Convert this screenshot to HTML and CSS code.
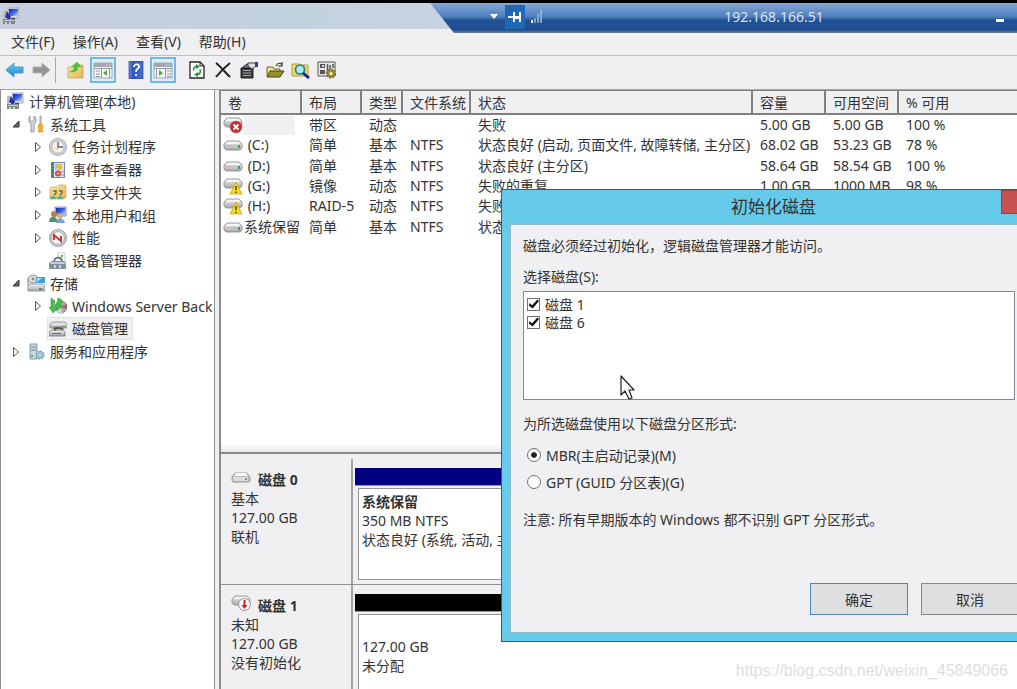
FILE: index.html
```html
<!DOCTYPE html>
<html lang="zh-CN">
<head>
<meta charset="utf-8">
<title>计算机管理</title>
<link rel="stylesheet" href="styles.css">
</head>
<body>
<svg class="defs" width="0" height="0" aria-hidden="true">
  <defs>
    <linearGradient id="gBlue" x1="0" y1="0" x2="1" y2="1"><stop offset="0" stop-color="#1a22b8"/><stop offset=".5" stop-color="#3b62dc"/><stop offset="1" stop-color="#c4d8fa"/></linearGradient>
    <linearGradient id="gArrow" x1="0" y1="0" x2="0" y2="1"><stop offset="0" stop-color="#6cc8f2"/><stop offset="1" stop-color="#1787cf"/></linearGradient>
    <linearGradient id="gDrive" x1="0" y1="0" x2="0" y2="1"><stop offset="0" stop-color="#f2f2f2"/><stop offset="1" stop-color="#a4a4a6"/></linearGradient>
    <linearGradient id="gFolder" x1="0" y1="0" x2="1" y2="1"><stop offset="0" stop-color="#fae9a4"/><stop offset="1" stop-color="#e2b354"/></linearGradient>
    <linearGradient id="gHelp" x1="0" y1="0" x2="1" y2="0"><stop offset="0" stop-color="#6d8fe2"/><stop offset=".25" stop-color="#3357c0"/><stop offset="1" stop-color="#4a70d2"/></linearGradient>
  </defs>
  <symbol id="tw-closed" viewBox="0 0 8 12"><path d="M1.500 1.500v9L6.500 6z" fill="#fff" stroke="#555"/></symbol>
  <symbol id="tw-open" viewBox="0 0 8 12"><path d="M7 3v6H1z" fill="#666" stroke="#333"/></symbol>
  <symbol id="computer" viewBox="0 0 18 18">
    <path d="M6 1h11v10H8z" fill="#d6dbe6" stroke="#a6adbb"/><path d="M7 2h9v7H7z" fill="url(#gBlue)"/>
    <path d="M1 5l3-2 2 4-3 5H1z" fill="#b5bcb9"/><path d="M5 4l4 6-2 3-4-3z" fill="#2832a4"/>
    <path d="M1 12h12v5H1z" fill="#7e8988"/><path d="M2 13h10v1H2zM3 15h2v2H3zM7 15h2v2H7z" fill="#c9d0ce"/><path d="M9 11h4v1H9z" fill="#444"/>
  </symbol>
  <symbol id="tools" viewBox="0 0 18 18">
    <path d="M3 1v4l2 2 2-2V1l2 2v4L7 9v8H4V9L2 7V3z" fill="#d9dbdd" stroke="#83878b" stroke-width=".8"/>
    <path d="M13 1h1v9h-1z" stroke="#8b8b8b" stroke-width=".7" fill="#ddd"/><path d="M12 9h3l1 3-1 2 1 3h-5l1-3-1-2z" fill="#f4ae25" stroke="#c98712" stroke-width=".5"/>
  </symbol>
  <symbol id="clock" viewBox="0 0 18 18">
    <circle cx="9" cy="9" r="9" fill="#9ea2a8"/><circle cx="9" cy="9" r="8.2" fill="#d3d6db"/><circle cx="9" cy="9" r="6.2" fill="#fbf4e0" stroke="#8d939c" stroke-width=".6"/>
    <path d="M9 4v5h5" fill="none" stroke="#4d6391" stroke-width="1.4"/><path d="M5 10h4v3z" fill="#f1cf87"/>
  </symbol>
  <symbol id="eventlog" viewBox="0 0 18 18">
    <path d="M2 1h14v16H2z" fill="#7488ae"/><path d="M5 2h10v14H5z" fill="#dce5f3"/><path d="M2 3h3M2 6h3M2 9h3M2 12h3M2 15h3" stroke="#47536c"/>
    <path d="M9 3h4v6H9z" fill="#efbd2c"/><path d="M6 4h3M6 6h3M6 8h2M12 11h3M12 14h3" stroke="#8297bd"/><circle cx="9" cy="12.5" r="3" fill="#dd4136"/><path d="M8 11.500l2 2m0-2l-2 2" stroke="#fff"/>
  </symbol>
  <symbol id="shared" viewBox="0 0 18 18">
    <path d="M1 5l1-1h6l2-2h6l1 1v11l-2 2H1z" fill="url(#gFolder)" stroke="#cba65b" stroke-width=".7"/>
    <path d="M4 8h3v2L5 12M10 8h3v2l-2 2" fill="none" stroke="#76633d" stroke-width="1.4"/><path d="M1 16c0-4 6-4 6 0zM8 16c0-4 6-4 6 0z" fill="#55b08a"/>
  </symbol>
  <symbol id="users" viewBox="0 0 18 18">
    <path d="M6 1h11v9H6z" fill="#c5cddc" stroke="#8c97ab"/><path d="M7 2h9v7H7z" fill="url(#gBlue)"/>
    <circle cx="5" cy="8" r="3" fill="#b38353"/><path d="M0 16c0-7 8-7 9 0z" fill="#4f946f"/><circle cx="11" cy="10" r="2.7" fill="#d9ac7c"/><path d="M7 17c0-6 8-6 9 0z" fill="#789fda"/>
  </symbol>
  <symbol id="perf" viewBox="0 0 18 18">
    <circle cx="9" cy="9" r="8.2" fill="#fff" stroke="#a3a5a9" stroke-width="1.6"/><circle cx="9" cy="9" r="6.4" fill="#fff" stroke="#686b70" stroke-width=".7"/>
    <path d="M5 11V6l7 6V7" fill="none" stroke="#d63834" stroke-width="2"/>
  </symbol>
  <symbol id="device" viewBox="0 0 18 18">
    <path d="M9 0h7v10H9z" fill="#f2f7f0" stroke="#bac2bc" stroke-width=".7"/><path d="M12 3h2v2h-2z" fill="#58b34f"/>
    <path d="M5 9c1-4 7-5 8 0" fill="none" stroke="#555e68" stroke-width="1.5"/><path d="M0 11l3-2h12l2 2v6H0z" fill="#82919d"/><path d="M1 11l2-1h11l2 1v1H1z" fill="#c7d0d6"/><path d="M5 13h2v3H5zM10 13h2v3h-2z" fill="#cbd1d5"/>
  </symbol>
  <symbol id="storage" viewBox="0 0 18 18">
    <ellipse cx="6" cy="5" rx="5" ry="4" fill="#dedfdf" stroke="#8e9496"/><circle cx="6" cy="5" r="1.4" fill="#888"/><path d="M1 5v6l4 1" fill="none" stroke="#8e9496" stroke-width="1.3"/>
    <path d="M9 3h9v6H9z" fill="#3f9fd2"/><path d="M10 4h5l-5 4z" fill="#ace0f5"/>
    <path d="M1 12l2-2h13l2 2v5H1z" fill="url(#gDrive)" stroke="#868b8d" stroke-width=".8"/><path d="M12 14h3v2h-3z" fill="#33a544"/>
  </symbol>
  <symbol id="backup" viewBox="0 0 18 18">
    <circle cx="12" cy="10" r="6" fill="#a6a5a8" stroke="#6f6e70" stroke-width=".7"/><path d="M12 10l6-3v5z" fill="#9a6470"/><path d="M9 5l3 7 2 5-6-2z" fill="#d4d5d6"/>
    <path d="M2 1v9H0l4 6 4-4-3-2 1-6zM9 13L6 8h2l1-7 4 2-2 6h2z" fill="#3ec342" stroke="#1c9432" stroke-width=".5"/>
  </symbol>
  <symbol id="diskmgmt" viewBox="0 0 18 18">
    <path d="M1 4l3-2h12l2 2v4H1z" fill="url(#gDrive)" stroke="#898989" stroke-width=".8"/><path d="M2 4h14l-2 1H3z" fill="#eee"/>
    <path d="M0 12l3-2h11l2 2v4H0z" fill="url(#gDrive)" stroke="#777" stroke-width=".8"/><path d="M4 9c1-3 8-3 11 0l-2 1c-3-2-6-1-7 1z" fill="#595b5b"/><path d="M3 13h9v1H3z" fill="#666"/><path d="M13 6h3v1h-3z" fill="#4fa04e"/>
  </symbol>
  <symbol id="services" viewBox="0 0 18 18">
    <path d="M3 1h7v15H3z" fill="#c8d6de" stroke="#8499a7"/><path d="M4 4h5M4 7h5" stroke="#6f8799"/><path d="M4 12h2v2H4z" fill="#53a973"/>
    <circle cx="13" cy="12" r="4" fill="#a9c9e2" stroke="#6288aa" stroke-dasharray="2 1"/><circle cx="13" cy="12" r="1.600" fill="#f3f7fa" stroke="#6288aa" stroke-width=".6"/>
  </symbol>
  <symbol id="drive" viewBox="0 0 20 18">
    <path d="M1 8l3-3h12l3 3v4l-2 2H3l-2-2z" fill="url(#gDrive)" stroke="#929295" stroke-width=".9"/><path d="M3 8l2-2h10l2 2z" fill="#f5f5f5"/><path d="M2 9h13v3H3z" fill="#c3c3c5"/><path d="M15 9h2v3h-2z" fill="#3ca24b"/>
  </symbol>
  <symbol id="drive-basic" viewBox="0 0 20 18">
    <path d="M1 9l3-4h12l3 4v4l-1 1H2l-1-1z" fill="#bdbdbf" stroke="#929295" stroke-width=".9"/><path d="M3 8l2-3h10l2 3z" fill="#f5f5f5"/><path d="M2 9h15v4H2z" fill="#dcdcde"/><path d="M14 10h2v2h-2z" fill="#7d9a52"/>
  </symbol>
  <symbol id="drive-gone" viewBox="0 0 20 18">
    <path d="M1 5l3-3h12l3 3v4l-2 2H3L1 9z" fill="url(#gDrive)" stroke="#929295" stroke-width=".9"/><path d="M3 5l2-2h10l2 2z" fill="#f5f5f5"/>
  </symbol>
  <symbol id="drive-error" viewBox="0 0 20 18">
    <use href="#drive-gone" width="20" height="18"/><circle cx="13" cy="11" r="6" fill="#cc2931" stroke="#ad6265" stroke-width=".6"/><path d="M10.500 8.500l5 5m0-5l-5 5" stroke="#fff" stroke-width="1.900"/>
  </symbol>
  <symbol id="drive-warn" viewBox="0 0 20 18">
    <use href="#drive-gone" width="20" height="18"/><path d="M13 5l6 12H7z" fill="#f7d91c" stroke="#c5a516" stroke-width=".8" stroke-linejoin="round"/><path d="M13 9v4M13 14.500v1.500" stroke="#4e4311" stroke-width="1.500"/>
  </symbol>
  <symbol id="drive-down" viewBox="0 0 20 18">
    <use href="#drive-gone" width="20" height="18"/><circle cx="13.500" cy="10.500" r="6" fill="#fafafa" stroke="#888" stroke-width=".9"/><path d="M12.500 6h2v5h2l-3 4-3-4h2z" fill="#d51f2b"/>
  </symbol>
</svg>

<div class="app">
  <header class="titlebar">
    <svg class="titlebar-icon"><use href="#computer"/></svg>
    <div class="rdp">
      <div class="rdp-tools">
        <button class="rdp-btn" aria-label="菜单"><svg width="8" height="5"><path d="M0 0h8L4 5z" fill="#fff"/></svg></button>
        <button class="rdp-btn rdp-pin" aria-label="固定"><svg width="14" height="12"><path d="M0 6h6M6 1v10M6 6h6M12 1v10" stroke="#fff" stroke-width="2"/><path d="M7 6h5v2H7z" fill="#fff"/></svg></button>
        <svg width="12" height="13"><path d="M0 10h2v3H0z" fill="#fff"/><path d="M3.500 8.500h1v4h-1zM6.500 4.500h1v8h-1zM9.500.5h1v12h-1z" fill="none" stroke="#9cbadf" stroke-width=".8"/></svg>
      </div>
      <span class="rdp-host">192.168.166.51</span>
      <button class="rdp-btn rdp-min" aria-label="最小化"><svg width="8" height="3"><path d="M0 0h8v3H0z" fill="#fff"/></svg></button>
    </div>
  </header>

  <nav class="menubar">
    <button>文件(F)</button><button>操作(A)</button><button>查看(V)</button><button>帮助(H)</button>
  </nav>

  <div class="toolbar">
    <div class="tool-group">
      <button aria-label="后退"><svg viewBox="0 0 20 18"><path d="M1 9l8-7v4h9v6H9v4z" fill="url(#gArrow)" stroke="#4a9cc9"/></svg></button>
      <button aria-label="前进"><svg viewBox="0 0 20 18"><path d="M19 9l-8-7v4H2v6h9v4z" fill="#949496" stroke="#b1b1b3"/></svg></button>
    </div>
    <div class="tool-group">
      <button aria-label="上一级"><svg viewBox="0 0 20 18"><path d="M2 6h8l2-2h5v13H2z" fill="url(#gFolder)" stroke="#cba75c" stroke-width=".8"/><path d="M4 10c3 0 4-2 4-4H5l6-5 5 5h-4c0 4-3 6-8 5z" fill="#53b93c" stroke="#8cc86b" stroke-width=".5"/></svg></button>
      <button class="on" aria-label="显示树"><svg viewBox="0 0 20 18"><path d="M1 2h18v15H1z" fill="#f6f6f8" stroke="#a3a8b4"/><path d="M1 2h18v4H1z" fill="#a2a7b2"/><path d="M13 4h1M16 4h1" stroke="#fff"/><path d="M1 7.500h18M8.500 8v9M3 10h4M3 13h4M3 15.500h4M16.500 8v9" stroke="#9299a8"/><path d="M14 9v6l-4-3z" fill="#3fb334"/></svg></button>
    </div>
    <div class="tool-group">
      <button aria-label="帮助"><svg viewBox="0 0 20 18"><path d="M3 0h14v18H3z" fill="url(#gHelp)" stroke="#2b438c" stroke-width=".7"/><path d="M8 6c0-4 6-3 5 0-1 2-3 2-3 5M10 13v2" fill="none" stroke="#fff" stroke-width="1.800"/></svg></button>
      <button class="on" aria-label="操作窗格"><svg viewBox="0 0 20 18"><path d="M1 2h18v15H1z" fill="#f6f6f8" stroke="#a3a8b4"/><path d="M1 2h18v4H1z" fill="#a2a7b2"/><path d="M13 4h1M16 4h1" stroke="#fff"/><path d="M1 7.500h18M12.500 8v9M14 10h4M14 13h4M14 15.500h4M3.500 8v9" stroke="#9299a8"/><path d="M6 9v6l4-3z" fill="#3fb334"/></svg></button>
    </div>
    <div class="tool-group">
      <button aria-label="刷新"><svg viewBox="0 0 20 18"><path d="M3 1h10l4 4v12H3z" fill="#fff" stroke="#252525" stroke-width="1.300"/><path d="M13 1v4h4" fill="none" stroke="#252525"/><path d="M6.500 9.500c0-3 1-4 3-4M13.500 8.500c0 4-1 5-3 5" fill="none" stroke="#249640" stroke-width="1.700"/><path d="M9 3v5l4-2.500zM11 16v-5l-4 2.500z" fill="#249640"/></svg></button>
      <button aria-label="删除"><svg viewBox="0 0 20 18"><path d="M3 2c4 3 9 9 14 14M17 2C12 6 7 11 3 16" fill="none" stroke="#222" stroke-width="2"/></svg></button>
      <button aria-label="属性"><svg viewBox="0 0 20 18"><path d="M2 7h12v10H2z" fill="#373737" stroke="#222"/><path d="M4 9.500h8M4 12h8M4 14.500h8" stroke="#a5a5a5"/><path d="M4 6l4-3h4v4H4z" fill="#777" stroke="#222"/><path d="M9 2h8v3l-4 3-4-3z" fill="#dedee8" stroke="#444"/><path d="M16 1h3v5h-3z" fill="#3d3c8c"/></svg></button>
      <button aria-label="打开"><svg viewBox="0 0 20 18"><path d="M2 6h6l1 2h6v7H2z" fill="#eae586" stroke="#6b6729"/><path d="M5 10h14l-4 6H2z" fill="#96912d" stroke="#4a4719"/><path d="M11 5c2-4 5-3 6-1m0-3v4h-4" fill="none" stroke="#333" stroke-width="1.200"/></svg></button>
      <button aria-label="查找"><svg viewBox="0 0 20 18"><path d="M1 3h7l1 1h8v11H1z" fill="#e9d965" stroke="#b2a142"/><circle cx="9" cy="8.500" r="4.500" fill="#a9e9ee" stroke="#26778b" stroke-width="1.600"/><path d="M12 12l6 5" stroke="#17219d" stroke-width="2.800"/></svg></button>
      <button aria-label="设置"><svg viewBox="0 0 20 18"><path d="M1 1h17v14H1z" fill="#e8e8e8" stroke="#555"/><path d="M3 3h5v4H3zM3 9h5v4H3z" fill="#555"/><path d="M5 4h2v2H5z" fill="#ddd"/><path d="M10.500 3v10M13 4v4M16 3v4" stroke="#555" stroke-width="1.500"/><circle cx="14" cy="12.500" r="4" fill="#9c952f" stroke="#77712a" stroke-width="2" stroke-dasharray="2 1"/><circle cx="14" cy="12.500" r="1.500" fill="#f5f2bb"/></svg></button>
    </div>
  </div>

  <main class="panes">
    <aside class="sidebar">
      <ul class="tree">
        <li class="node"><svg><use href="#computer"/></svg><span>计算机管理(本地)</span></li>
        <li class="node l1"><svg class="tw"><use href="#tw-open"/></svg><svg><use href="#tools"/></svg><span>系统工具</span></li>
        <li class="node l2"><svg class="tw"><use href="#tw-closed"/></svg><svg><use href="#clock"/></svg><span>任务计划程序</span></li>
        <li class="node l2"><svg class="tw"><use href="#tw-closed"/></svg><svg><use href="#eventlog"/></svg><span>事件查看器</span></li>
        <li class="node l2"><svg class="tw"><use href="#tw-closed"/></svg><svg><use href="#shared"/></svg><span>共享文件夹</span></li>
        <li class="node l2"><svg class="tw"><use href="#tw-closed"/></svg><svg><use href="#users"/></svg><span>本地用户和组</span></li>
        <li class="node l2"><svg class="tw"><use href="#tw-closed"/></svg><svg><use href="#perf"/></svg><span>性能</span></li>
        <li class="node l2"><svg class="tw"></svg><svg><use href="#device"/></svg><span>设备管理器</span></li>
        <li class="node l1"><svg class="tw"><use href="#tw-open"/></svg><svg><use href="#storage"/></svg><span>存储</span></li>
        <li class="node l2"><svg class="tw"><use href="#tw-closed"/></svg><svg><use href="#backup"/></svg><span>Windows Server Back</span></li>
        <li class="node l2"><svg class="tw"></svg><span class="picked"><svg><use href="#diskmgmt"/></svg><span>磁盘管理</span></span></li>
        <li class="node l1"><svg class="tw"><use href="#tw-closed"/></svg><svg><use href="#services"/></svg><span>服务和应用程序</span></li>
      </ul>
    </aside>

    <section class="content">
      <div class="volumes">
        <table>
          <colgroup><col class="c-vol"><col class="c-layout"><col class="c-type"><col class="c-fs"><col class="c-status"><col class="c-size"><col class="c-size"><col></colgroup>
          <thead><tr><th>卷</th><th>布局</th><th>类型</th><th>文件系统</th><th>状态</th><th>容量</th><th>可用空间</th><th>% 可用</th></tr></thead>
          <tbody>
            <tr><td><div class="vol"><svg><use href="#drive-error"/></svg><span class="blank"></span></div></td><td>带区</td><td>动态</td><td></td><td>失败</td><td>5.00 GB</td><td>5.00 GB</td><td>100 %</td></tr>
            <tr><td><div class="vol"><svg><use href="#drive"/></svg><span> (C:)</span></div></td><td>简单</td><td>基本</td><td>NTFS</td><td>状态良好 (启动, 页面文件, 故障转储, 主分区)</td><td>68.02 GB</td><td>53.23 GB</td><td>78 %</td></tr>
            <tr><td><div class="vol"><svg><use href="#drive"/></svg><span> (D:)</span></div></td><td>简单</td><td>基本</td><td>NTFS</td><td>状态良好 (主分区)</td><td>58.64 GB</td><td>58.54 GB</td><td>100 %</td></tr>
            <tr><td><div class="vol"><svg><use href="#drive-warn"/></svg><span> (G:)</span></div></td><td>镜像</td><td>动态</td><td>NTFS</td><td>失败的重复</td><td>1.00 GB</td><td>1000 MB</td><td>98 %</td></tr>
            <tr><td><div class="vol"><svg><use href="#drive-warn"/></svg><span> (H:)</span></div></td><td>RAID-5</td><td>动态</td><td>NTFS</td><td>失败</td><td></td><td></td><td></td></tr>
            <tr><td><div class="vol"><svg><use href="#drive"/></svg><span>系统保留</span></div></td><td>简单</td><td>基本</td><td>NTFS</td><td>状态</td><td></td><td></td><td></td></tr>
          </tbody>
        </table>
      </div>
      <div class="disks">
        <article class="disk">
          <div class="disk-info">
            <h2><svg><use href="#drive-basic"/></svg>磁盘 0</h2>
            <p>基本</p><p>127.00 GB</p><p>联机</p>
          </div>
          <div class="disk-map">
            <div class="bar primary"></div>
            <div class="part"><p><b>系统保留</b></p><p>350 MB NTFS</p><p>状态良好 (系统, 活动, 主分区)</p></div>
          </div>
        </article>
        <article class="disk">
          <div class="disk-info">
            <h2><svg><use href="#drive-down"/></svg>磁盘 1</h2>
            <p>未知</p><p>127.00 GB</p><p>没有初始化</p>
          </div>
          <div class="disk-map">
            <div class="bar free"></div>
            <div class="part unallocated"><p>127.00 GB</p><p>未分配</p></div>
          </div>
        </article>
      </div>
    </section>
  </main>

  <form class="dialog" role="dialog" aria-labelledby="dlg-title">
    <div class="dialog-head">
      <h1 id="dlg-title">初始化磁盘</h1>
      <button type="button" class="close" aria-label="关闭"><svg width="10" height="10"><path d="M1 1l8 8M9 1L1 9" stroke="#3a1c1c" stroke-width="2"/></svg></button>
    </div>
    <div class="dialog-body">
      <p>磁盘必须经过初始化，逻辑磁盘管理器才能访问。</p>
      <p class="list-label" id="list-label">选择磁盘(S):</p>
      <div class="list" role="group" aria-labelledby="list-label">
        <label><input type="checkbox" checked>磁盘 1</label>
        <label><input type="checkbox" checked>磁盘 6</label>
      </div>
      <p class="style-label">为所选磁盘使用以下磁盘分区形式:</p>
      <div class="options">
        <label><input type="radio" name="style" checked>MBR(主启动记录)(M)</label>
        <label><input type="radio" name="style">GPT (GUID 分区表)(G)</label>
      </div>
      <p class="note">注意: 所有早期版本的 Windows 都不识别 GPT 分区形式。</p>
      <div class="actions">
        <button type="button" class="default">确定</button>
        <button type="button">取消</button>
      </div>
    </div>
  </form>

  <svg class="pointer" viewBox="0 0 15 25"><path d="M1 1v19l4-4 4 8 3-1-3-8h5z" fill="#fff" stroke="#222" stroke-width="1.200" stroke-linejoin="round"/></svg>
  <span class="watermark">https://blog.csdn.net/weixin_45849066</span>
</div>
</body>
</html>
```
FILE: styles.css
```css
* { box-sizing: border-box; }

body {
  margin: 0;
  background: #000;
  color: #333;
  font: 14px/19px "Noto Sans", "Noto Sans CJK SC", sans-serif;
}

p, h1, h2, ul { margin: 0; padding: 0; }
button { font: inherit; color: inherit; border: 0; background: none; padding: 0; }
.defs { position: absolute; }

.app {
  position: relative;
  display: flex;
  flex-direction: column;
  height: 100vh;
  overflow: hidden;
  border-top: 3px solid #000;
  background: #f0eff1;
}

/* Title bar and connection bar */
.titlebar {
  position: relative;
  display: flex;
  align-items: center;
  height: 26px;
  padding-left: 2px;
  background: linear-gradient(90deg, #c8cfdf, #c2d3de 30%, #c9d2e1 45%);
}
.titlebar-icon { width: 18px; height: 18px; }
.rdp {
  position: absolute;
  z-index: 1;
  top: 0;
  left: 430px;
  right: 0;
  height: 30px;
  display: flex;
  align-items: center;
  justify-content: space-between;
  padding: 0 12px 3px 58px;
  clip-path: polygon(0 0, 100% 0, 100% 100%, 24px 100%);
  background: linear-gradient(#85a9d8, #4f80bd 45%, #215093 58%, #1e4f92 90%, #747f96);
}
.rdp-tools { display: flex; align-items: center; gap: 6px; }
.rdp-btn { display: flex; align-items: center; justify-content: center; width: 11px; height: 24px; }
.rdp-pin { width: 20px; background: #2068b4; }
.rdp-host {
  position: absolute;
  left: 0;
  right: 0;
  padding-left: 101px;
  text-align: center;
  color: #d9e4f2;
}
.rdp-min { padding-top: 8px; }

.menubar {
  display: flex;
  height: 27px;
  padding: 0 2px 2px;
  border-bottom: 1px solid #bfbfc1;
}
.menubar button { padding: 0 9px; }

.toolbar {
  display: flex;
  align-items: center;
  height: 34px;
  padding: 0 2px 5px;
  border-bottom: 1px solid #a3a3a5;
}
.tool-group { display: flex; gap: 1px; margin-right: 7px; }
.tool-group:first-child { gap: 0; padding-right: 1px; border-right: 1px solid #aaaaac; }
.tool-group:last-child { gap: 0; margin-left: 1px; }
.toolbar button { display: flex; align-items: center; justify-content: center; width: 26px; height: 26px; }
.toolbar svg { width: 20px; height: 18px; }
.toolbar .on { border: 2px solid #72b8e1; background: #dceefa; }

/* Panes */
.panes { display: flex; flex: 1; min-height: 0; }
.sidebar {
  width: 215px;
  flex: none;
  overflow: hidden;
  border: 1px solid #8f8f92;
  border-width: 0 1px;
  background: #fff;
}
.tree {
  display: grid;
  grid-auto-rows: 1fr;
  height: 273px;
  padding-left: 5px;
  list-style: none;
}
.node { display: flex; align-items: center; gap: 5px; white-space: nowrap; }
.node svg { width: 18px; height: 18px; flex: none; }
.node.l1 { padding-left: 6px; }
.node.l2 { padding-left: 28px; }
.node .tw { width: 8px; height: 12px; margin-right: 2px; }
.picked {
  display: flex;
  align-items: center;
  gap: 5px;
  height: 21px;
  margin-left: -1px;
  padding: 0 4px 0 1px;
  background: #f0eff1;
  outline: 1px solid #e2e2e4;
}

.content {
  display: flex;
  flex-direction: column;
  flex: 1;
  min-width: 0;
  margin-left: 4px;
  border-left: 2px solid #8a8a8d;
}
.volumes {
  flex: 1;
  min-height: 0;
  background: linear-gradient(#fff calc(100% - 8px), #e9e9eb);
  border-bottom: 2px solid #8a8a8d;
}
table { width: 100%; height: 147px; table-layout: fixed; border-collapse: separate; border-spacing: 0; }
.c-vol { width: 81px; }
.c-layout { width: 60px; }
.c-type { width: 41px; }
.c-fs { width: 68px; }
.c-status { width: 282px; }
.c-size { width: 73px; }
th, td { padding: 0 0 0 7px; text-align: left; font-weight: 400; white-space: nowrap; }
th {
  height: 25px;
  background: #f0eff1;
  border: solid #808083;
  border-width: 1px 2px 2px 0;
}
th:last-child { border-right: 0; }
td:first-child { padding-left: 2px; }
td { height: 20px; line-height: 18px; }
.vol { display: flex; align-items: center; gap: 1px; white-space: pre; }
.vol svg { width: 20px; height: 18px; flex: none; }
.blank { width: 51px; height: 19px; background: #f0eff1; }

/* Graphical disk list */
.disks { flex: none; height: 235px; overflow: hidden; padding-top: 5px; }
.disk { display: grid; grid-template-columns: 132px 1fr; height: 126px; border-bottom: 1px solid #929294; }
.disk-info { padding: 11px 0 0 10px; border-right: 2px solid #a2a2a4; }
.disk h2 { display: flex; align-items: center; gap: 7px; height: 19px; font-size: 14px; line-height: 19px; }
.disk h2 svg { width: 20px; height: 18px; margin-bottom: 5px; }
.disk-map {
  display: flex;
  flex-direction: column;
  gap: 2px;
  min-width: 0;
  padding: 9px 0 4px 2px;
}
.bar { height: 18px; border-bottom: 1px solid #99999b; }
.primary { background: #000080; }
.free { background: #000; }
.part {
  flex: 1;
  margin-left: 3px;
  padding: 3px 0 0 3px;
  border: 1px solid #949497;
  border-right: 0;
  background: #fff;
  white-space: nowrap;
}
.unallocated { padding-top: 22px; }

/* Dialog */
.dialog {
  position: absolute;
  top: 186px;
  left: 501px;
  right: -29px;
  border: 1px solid #4b565b;
  background: #66caeb;
  padding: 0 8px 8px;
}
.dialog-head { display: flex; align-items: center; justify-content: center; height: 34px; }
.dialog h1 { font-size: 17px; line-height: 24px; font-weight: 400; }
.close {
  position: absolute;
  top: 0;
  right: 0;
  width: 44px;
  height: 24px;
  padding: 4px 0 0 2px;
  border: 1px solid #8f4545;
  background: #c75150;
}
.dialog-body {
  border: 1px solid #8fb7c6;
  background: #f0eff1;
  padding: 11px 21px 17px 12px;
}
.list-label { margin-top: 12px; }
.list {
  height: 109px;
  margin-top: 5px;
  padding: 3px;
  border: 1px solid #828790;
  background: #fff;
}
.dialog label { display: flex; align-items: center; gap: 5px; height: 18px; }
.dialog input { appearance: none; flex: none; margin: 0; background: #fff; border: 1px solid #707070; }
.dialog input[type="checkbox"] { width: 13px; height: 13px; }
.dialog input[type="checkbox"]:checked::before {
  content: "";
  display: block;
  width: 11px;
  height: 11px;
  background: #111;
  clip-path: polygon(10% 40%, 38% 62%, 85% 8%, 100% 22%, 42% 92%, 10% 66%);
}
.style-label { margin-top: 14px; }
.options { display: flex; flex-direction: column; gap: 9px; margin: 13px 0 0 4px; }
.dialog input[type="radio"] { width: 14px; height: 14px; border-radius: 50%; padding: 3px; }
.dialog input[type="radio"]:checked { background: #222 content-box; box-shadow: inset 0 0 0 3px #fff; }
.note { margin-top: 19px; }
.actions { display: flex; gap: 13px; justify-content: flex-end; margin: 54px -4px 0 0; }
.actions button { width: 98px; height: 32px; border: 1px solid #88888b; background: #dfdfe1; }
.actions .default { border-color: #4d85b8; }

.pointer { position: absolute; top: 372px; left: 620px; width: 15px; height: 25px; }
.watermark {
  position: absolute;
  right: 9px;
  bottom: 8px;
  color: #dedede;
  font: 16px/20px "Liberation Sans", sans-serif;
}
```
